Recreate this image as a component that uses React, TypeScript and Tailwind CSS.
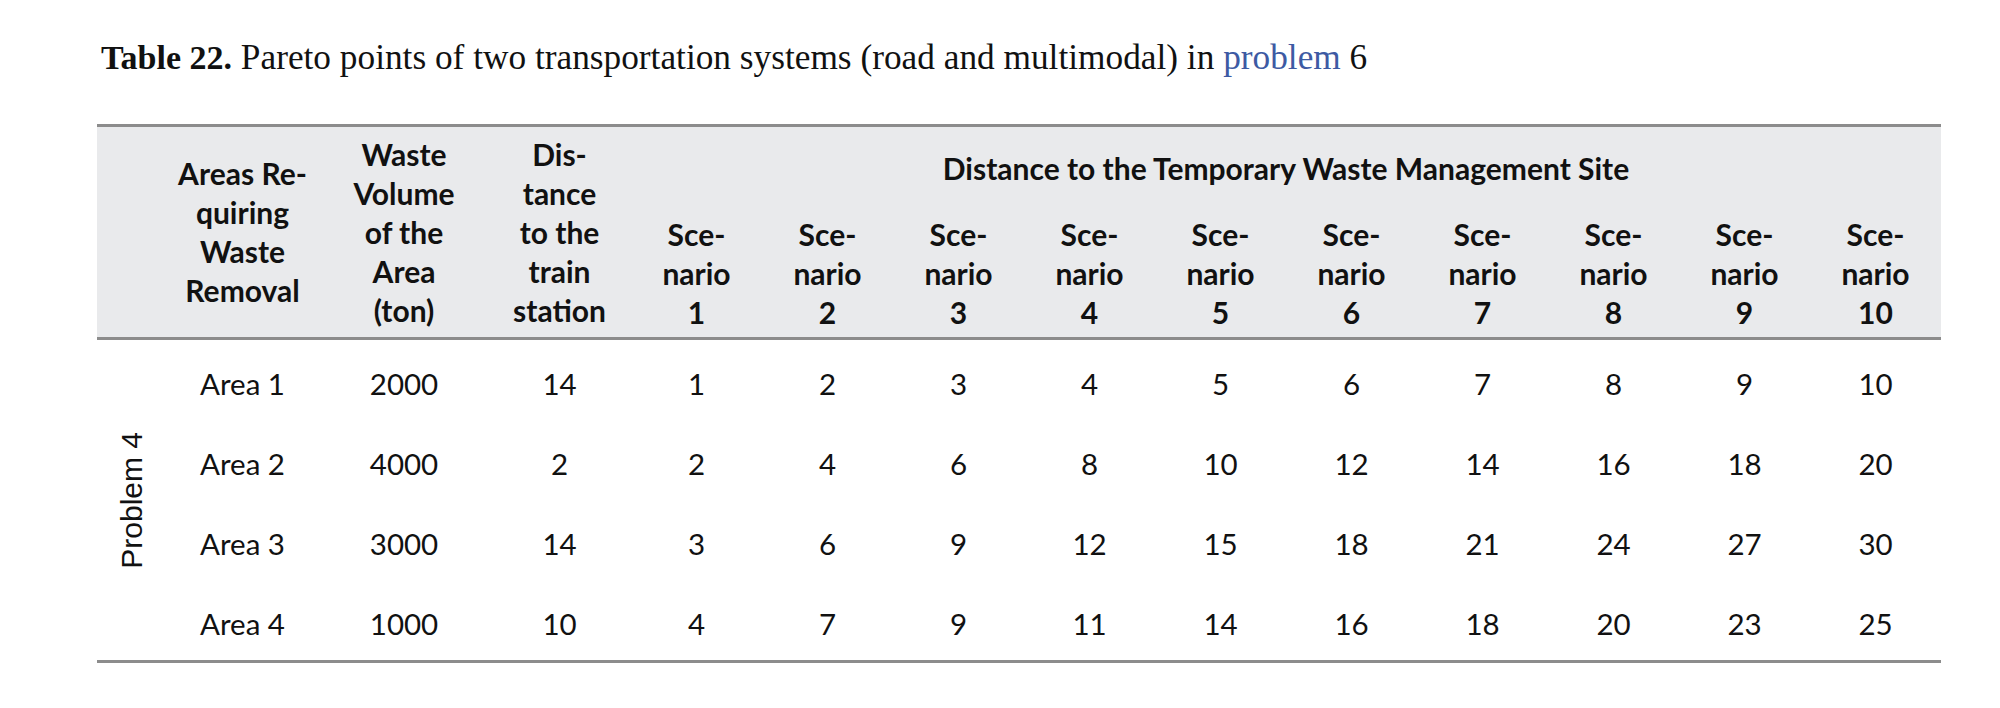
const scenarios = [1, 2, 3, 4, 5, 6, 7, 8, 9, 10];

const rows = [
  { area: "Area 1", volume: "2000", train: "14", values: [1, 2, 3, 4, 5, 6, 7, 8, 9, 10] },
  { area: "Area 2", volume: "4000", train: "2", values: [2, 4, 6, 8, 10, 12, 14, 16, 18, 20] },
  { area: "Area 3", volume: "3000", train: "14", values: [3, 6, 9, 12, 15, 18, 21, 24, 27, 30] },
  { area: "Area 4", volume: "1000", train: "10", values: [4, 7, 9, 11, 14, 16, 18, 20, 23, 25] },
];

const cols = "grid grid-cols-[68px_155px_168px_143px_repeat(10,131px)]";

export default function App() {
  return (
    <div className="min-h-screen bg-white pl-[97px] pt-[38px] text-[#111]">
      <h1 className="pl-[4px] font-['Liberation_Serif',serif] text-[35.3px] font-normal leading-[40px]">
        <span className="text-[34px] font-bold">Table 22.</span> Pareto points of two transportation systems
        (road and multimodal) in <span className="text-[#3d5aa3]">problem</span> 6
      </h1>

      <div className="mt-[46px] w-[1844px] border-y-[3px] border-[#8c8c8c] font-['Lato',sans-serif]">
        <div className={`${cols} grid-rows-[82px_128px] border-b-[3px] border-[#8c8c8c] bg-[#e9eaec] text-[30px] font-bold leading-[39px]`}>
          <div className="row-span-2" />
          <div className="row-span-2 flex items-center justify-center text-center">
            <span>
              Areas Re-
              <br />
              quiring
              <br />
              Waste
              <br />
              Removal
            </span>
          </div>
          <div className="row-span-2 flex items-center justify-center text-center">
            <span>
              Waste
              <br />
              Volume
              <br />
              of the
              <br />
              Area
              <br />
              (ton)
            </span>
          </div>
          <div className="row-span-2 flex items-center justify-center text-center">
            <span>
              Dis-
              <br />
              tance
              <br />
              to the
              <br />
              train
              <br />
              station
            </span>
          </div>
          <div className="col-span-10 flex items-center justify-center">
            Distance to the Temporary Waste Management Site
          </div>
          {scenarios.map((n) => (
            <div key={n} className="flex flex-col items-center justify-end pb-[5px] text-center">
              <span>Sce-</span>
              <span>nario</span>
              <span>{n}</span>
            </div>
          ))}
        </div>

        <div className={`${cols} grid-rows-[repeat(4,80px)] text-[29.5px] leading-[39px]`}>
          <div className="row-span-4 flex items-center justify-center">
            <span className="rotate-180 font-['Liberation_Sans',sans-serif] text-[30px] [writing-mode:vertical-rl]">
              Problem 4
            </span>
          </div>
          {rows.map((r) => (
            <div key={r.area} className="contents">
              <div className="flex items-center justify-center pt-[6px]">{r.area}</div>
              <div className="flex items-center justify-center pt-[6px]">{r.volume}</div>
              <div className="flex items-center justify-center pt-[6px]">{r.train}</div>
              {r.values.map((v, i) => (
                <div key={i} className="flex items-center justify-center pt-[6px]">
                  {v}
                </div>
              ))}
            </div>
          ))}
        </div>
      </div>
    </div>
  );
}
